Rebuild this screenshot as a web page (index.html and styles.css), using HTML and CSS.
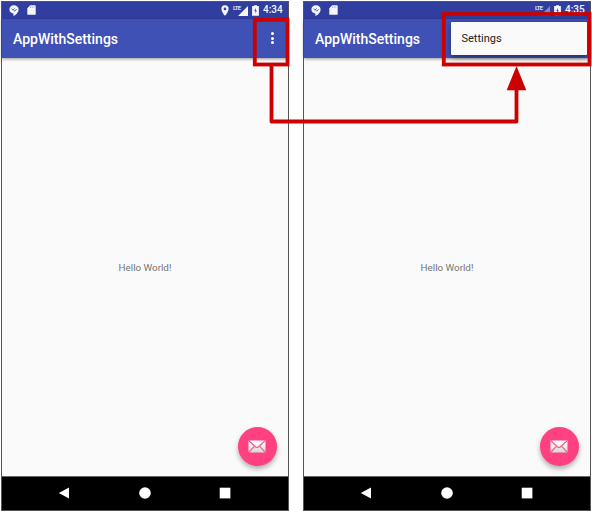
FILE: index.html
```html
<!DOCTYPE html>
<html lang="en">
<head>
<meta charset="utf-8">
<title>AppWithSettings</title>
<link rel="stylesheet" href="styles.css">
</head>
<body>
<svg class="defs" width="0" height="0" aria-hidden="true">
  <defs>
    <linearGradient id="paper" x1="0" y1="0" x2="0" y2="1"><stop offset="0" stop-color="#fff"/><stop offset="1" stop-color="#d8d8d8"/></linearGradient>
    <symbol id="chat" viewBox="0 0 10 11"><path fill="#f5f6fc" d="M5 .3C2.200.3.4 2 .4 4.400c0 2.200 1.700 3.800 4 4V11c2.700-1.300 5.200-3.900 5.200-6.600C9.600 2 7.700.3 5 .3z"/><path d="M2.500 3.600l1.400 1.500 1.700-1.700M4.600 5.800l1.500.1 1.500-1.700" fill="none" stroke="#303f9f" stroke-width=".8"/></symbol>
    <symbol id="sd" viewBox="0 0 9 10"><path fill="#f5f6fc" d="M3.200.2h4.600q.9 0 .9.900v7.800q0 .9-.9.900H1.200q-.9 0-.9-.9V3.200z"/><path d="M3.500 1.300v1.700M5.200 1.300v1.700M6.900 1.300v1.700" stroke="#8c95cc" stroke-width=".6"/></symbol>
    <symbol id="pin" viewBox="0 0 8 11"><path fill="#f5f6fc" fill-rule="evenodd" d="M4 .3A3.600 3.600 0 0 0 .4 3.900C.4 6.700 4 10.700 4 10.700s3.600-4 3.600-6.800A3.600 3.600 0 0 0 4 .3zm0 2.300a1.350 1.350 0 1 1 0 2.700 1.350 1.350 0 0 1 0-2.700z"/></symbol>
    <symbol id="battery" viewBox="0 0 7 11"><path fill="#f5f6fc" d="M2 1V.2h3V1h1.900v9.800H.1V1z"/><path fill="#303f9f" d="M3.800 3L2.300 6.100h1.100v2.300L4.800 5.400h-1z"/></symbol>
    <symbol id="mail" viewBox="0 0 18 13"><rect x=".5" y=".5" width="17" height="12" rx=".8" fill="url(#paper)"/><path d="M1 1l6.700 6q1.300 1 2.600 0L17 1M1 12l5.500-5.800M17 12l-5.500-5.800" fill="none" stroke="#f15c91" stroke-width="1.100"/></symbol>
  </defs>
</svg>
<main class="stage">
  <section class="phone">
    <div class="status">
      <svg class="chat"><use href="#chat"/></svg><svg class="sd"><use href="#sd"/></svg>
      <div class="status-right">
        <svg class="pin"><use href="#pin"/></svg>
        <span class="network"><span class="lte">LTE</span><svg class="signal" viewBox="0 0 9 9"><path d="M9 0v9H0z"/></svg></span>
        <svg class="battery"><use href="#battery"/></svg><span class="time">4:34</span>
      </div>
    </div>
    <header class="appbar"><h1>AppWithSettings</h1><span class="more"><i></i><i></i><i></i></span></header>
    <div class="content"><p>Hello World!</p><span class="fab"><svg><use href="#mail"/></svg></span></div>
    <nav class="navbar">
      <svg viewBox="0 0 12 12"><path d="M11 .5v11L.8 6z"/></svg>
      <svg viewBox="0 0 12 12"><circle cx="6" cy="6" r="5.800"/></svg>
      <svg viewBox="0 0 12 12"><path d="M.7.700h10.700v10.700H.7z"/></svg>
    </nav>
  </section>
  <section class="phone">
    <div class="status">
      <svg class="chat"><use href="#chat"/></svg><svg class="sd"><use href="#sd"/></svg>
      <div class="status-right">
        <span class="network"><span class="lte">LTE</span><svg class="signal dim" viewBox="0 0 9 9"><path d="M9 0v9H0z"/></svg></span>
        <svg class="battery"><use href="#battery"/></svg><span class="time">4:35</span>
      </div>
    </div>
    <header class="appbar"><h1>AppWithSettings</h1></header>
    <div class="content"><p>Hello World!</p><span class="fab"><svg><use href="#mail"/></svg></span></div>
    <nav class="navbar">
      <svg viewBox="0 0 12 12"><path d="M11 .5v11L.8 6z"/></svg>
      <svg viewBox="0 0 12 12"><circle cx="6" cy="6" r="5.800"/></svg>
      <svg viewBox="0 0 12 12"><path d="M.7.700h10.700v10.700H.7z"/></svg>
    </nav>
    <div class="menu">Settings</div>
  </section>
  <svg class="callout" viewBox="0 0 592 511">
    <g fill="none" stroke="#c00" stroke-width="3.800">
      <rect x="254.800" y="19.800" width="32.700" height="44.700"/>
      <rect x="443.800" y="14" width="145.700" height="50.500"/>
      <path d="M271.500 65v56.500h245V88" stroke-linejoin="round"/>
    </g>
    <path d="M516.500 66l9.800 24.300h-19.600z" fill="#c00"/>
  </svg>
</main>
</body>
</html>
```
FILE: styles.css
```css
* { box-sizing: border-box; }
body {
  margin: 0;
  background: #fff;
  font-family: Roboto, "Liberation Sans", sans-serif;
  overflow: hidden;
}
svg { display: block; flex: none; }
.defs { position: absolute; }
.stage {
  position: relative;
  width: 592px;
  height: 511px;
  padding: 1px 0 0 1px;
  display: flex;
  gap: 14px;
}
.phone {
  position: relative;
  width: 288px;
  height: 510px;
  border: 1px solid #555;
  background: #fafafa;
  display: flex;
  flex-direction: column;
}
.status {
  height: 17px;
  flex: none;
  background: #303f9f;
  color: #f5f6fc;
  display: flex;
  align-items: center;
  padding: 0 5px 1px 7px;
}
.chat { width: 10px; height: 11px; margin-right: 8px; }
.sd { width: 9px; height: 10px; }
.status-right { margin-left: auto; display: flex; align-items: center; }
.pin { width: 8px; height: 11px; margin-right: 4px; }
.network { display: flex; width: 14px; height: 11px; margin-right: 5px; }
.lte {
  width: 7px;
  font-size: 6px;
  line-height: 6px;
  font-weight: 500;
  letter-spacing: -.7px;
}
.signal { width: 10px; height: 10px; margin: 1px 0 0 -2px; fill: #f5f6fc; }
.signal.dim { opacity: .4; }
.battery { width: 7px; height: 11px; margin-right: 4px; }
.time { font-size: 10px; font-weight: 500; line-height: 16px; width: 20px; white-space: nowrap; }
.appbar {
  position: relative;
  height: 38.500px;
  flex: none;
  background: #3f51b5;
  box-shadow: 0 1px 3px rgba(0, 0, 0, .4);
  display: flex;
  align-items: center;
  justify-content: space-between;
  padding: 0 14.500px 0 11px;
}
h1 { margin: 0; padding-top: 2px; color: #fff; font-size: 14px; font-weight: 500; line-height: 18px; }
.more { display: grid; gap: 1.500px; }
.more i { width: 3px; height: 3px; border-radius: 50%; background: #fff; }
.content {
  position: relative;
  flex: 1;
  display: flex;
  align-items: center;
  justify-content: center;
}
.content p { margin: 0; padding-top: 2px; font-size: 9.800px; line-height: 12px; color: #757575; }
.fab {
  position: absolute;
  right: 11px;
  bottom: 10.500px;
  width: 39px;
  height: 39px;
  border-radius: 50%;
  background: #ff4081;
  box-shadow: 0 3px 5px rgba(0, 0, 0, .3);
  display: grid;
  place-items: center;
}
.fab svg { width: 18px; height: 13px; margin-right: 1px; }
.navbar {
  height: 34px;
  flex: none;
  background: #000;
  border-top: 1px solid #666;
  display: flex;
  align-items: center;
  justify-content: space-between;
  padding: 0 57px 1px 56px;
}
.navbar svg { width: 12px; height: 12px; fill: #fff; }
.menu {
  position: absolute;
  top: 19.500px;
  right: 3px;
  width: 136.500px;
  height: 33.500px;
  padding-left: 11px;
  background: #fafafa;
  border-radius: 1px;
  box-shadow: 0 2px 6px rgba(0, 0, 0, .5);
  font-size: 11px;
  line-height: 33px;
  color: #212121;
}
.callout { position: absolute; left: 0; top: 0; width: 592px; height: 511px; }
```
